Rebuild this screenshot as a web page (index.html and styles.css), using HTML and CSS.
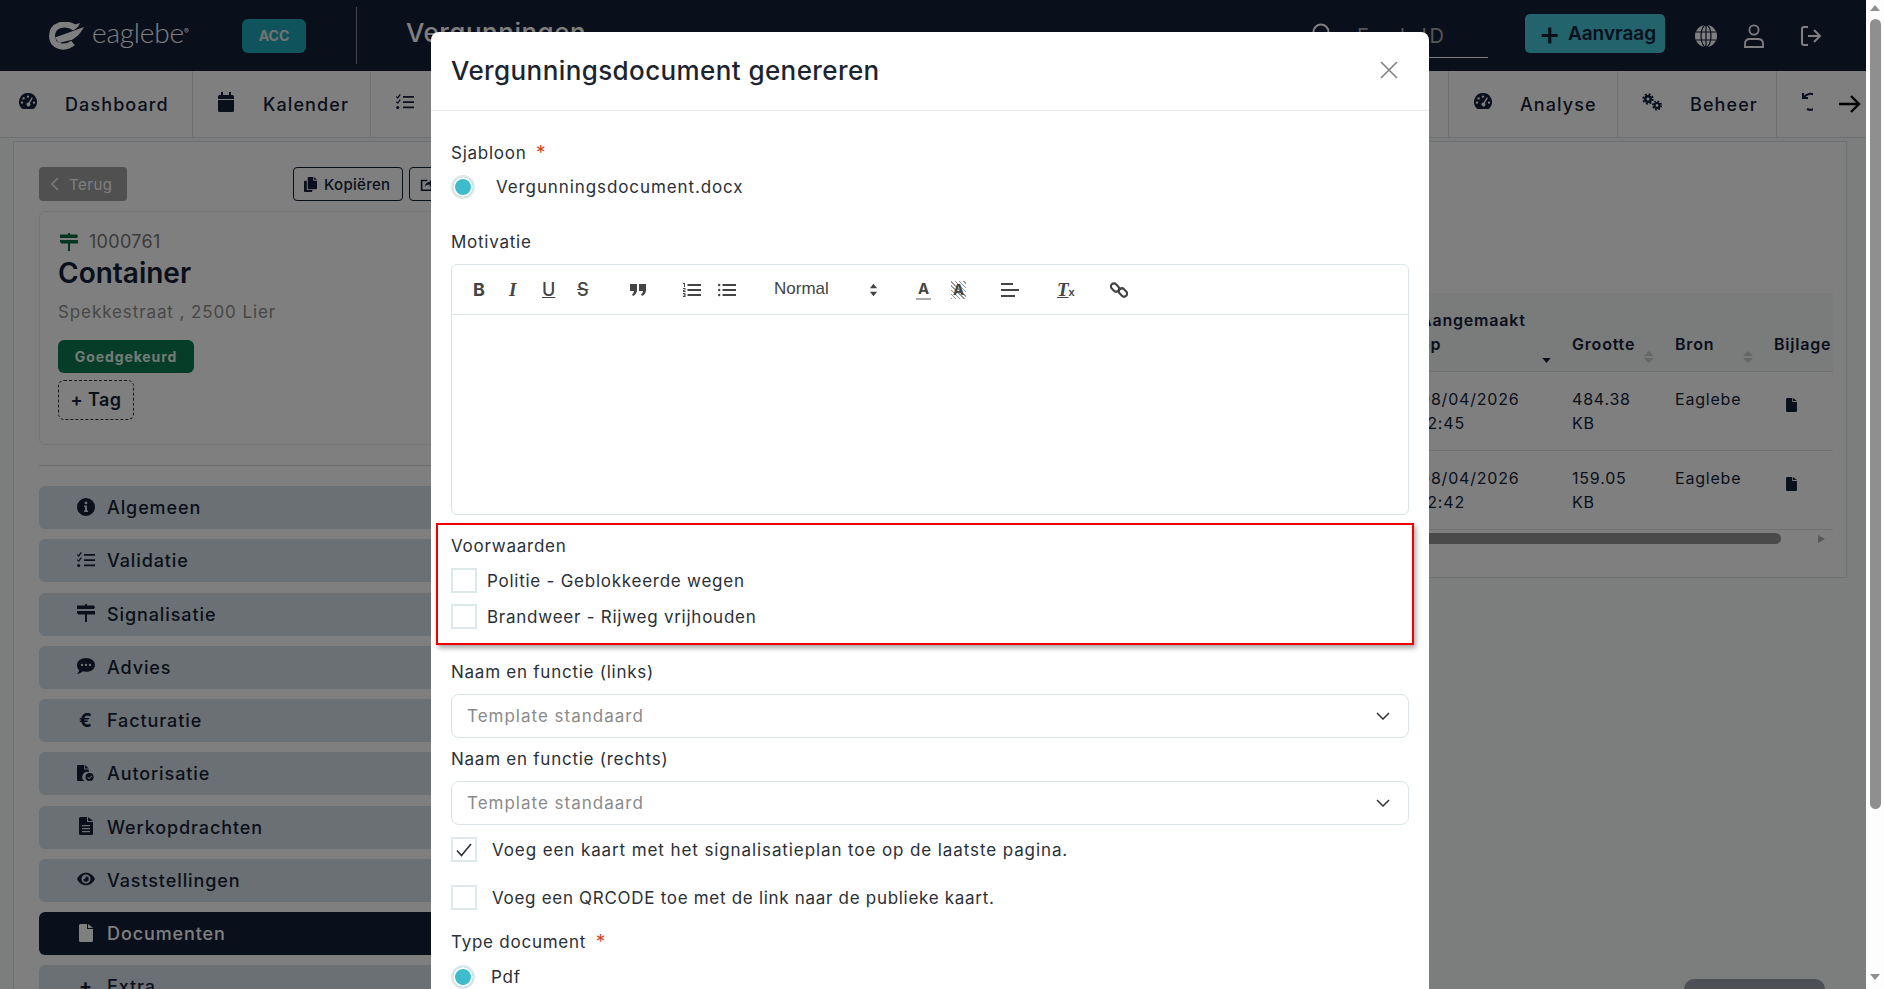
FILE: index.html
```html
<!DOCTYPE html>
<html lang="nl">
<head>
<meta charset="UTF-8">
<title>Vergunningen</title>
<link rel="stylesheet" href="styles.css">
</head>
<body>
<svg class="sprite" width="0" height="0">
  <symbol id="i-gauge" viewBox="0 0 18 18"><path fill-rule="evenodd" d="M9 0a9 9 0 0 1 6.500 15.200q-.6.8-1.500.8H4q-.9 0-1.500-.8A9 9 0 0 1 9 0zM9 2.400a1.200 1.200 0 1 0 0 2.400 1.200 1.200 0 0 0 0-2.400zM4.600 4.200a1.200 1.200 0 1 0 0 2.400 1.200 1.200 0 0 0 0-2.400zM3 8.400a1.200 1.200 0 1 0 0 2.400 1.200 1.200 0 0 0 0-2.400zM15 8.400a1.200 1.200 0 1 0 0 2.400 1.200 1.200 0 0 0 0-2.400zM12.700 4.300L9.600 9.400a2 2 0 1 0 1.300.6l3-5z"/></symbol>
  <symbol id="i-cal" viewBox="0 0 16 20"><path d="M3 0h2v3h6V0h2v3h1.500Q16 3 16 4.500V7H0V4.500Q0 3 1.500 3H3zM0 8h16v10.500Q16 20 14.500 20h-13Q0 20 0 18.500z"/></symbol>
  <symbol id="i-tasks" viewBox="0 0 18 16"><path d="M7 2h11v1.800H7zM7 7.200h11V9H7zM7 12.400h11v1.800H7zM.6 2l1 1L3.800 0l1 .7L1.800 5 0 3zM.6 7.200l1 1 2.200-3 1 .7-3 4.100L0 8.200z"/><circle cx="1.700" cy="13.500" r="1.600"/></symbol>
  <symbol id="i-sign" viewBox="0 0 18 18"><path d="M8 0h2v1.500h7l1 1.800-1 1.700H0V1.500h8zM0 7h18v3.500H10V18H8v-7.500H1l-1-1.700z"/></symbol>
  <symbol id="i-info" viewBox="0 0 18 18"><path fill-rule="evenodd" d="M9 0a9 9 0 1 1 0 18A9 9 0 0 1 9 0zM9 3.500a1.400 1.400 0 1 0 0 2.800 1.400 1.400 0 0 0 0-2.800zM7 7.500v1.600h1v3.300H7V14h4v-1.600h-1V7.500z"/></symbol>
  <symbol id="i-chat" viewBox="0 0 18 16"><path fill-rule="evenodd" d="M9 0c5 0 9 3 9 6.900s-4 6.900-9 6.900c-1.200 0-2.300-.2-3.300-.5C4.300 14.600 2.300 16 0 16c1-.9 1.900-2.200 2.200-3.700C.8 11 0 9 0 6.900 0 3 4 0 9 0zM5 5.700a1.200 1.200 0 1 0 0 2.400 1.200 1.200 0 0 0 0-2.400zM9 5.700a1.200 1.200 0 1 0 0 2.400 1.200 1.200 0 0 0 0-2.400zM13 5.700a1.200 1.200 0 1 0 0 2.400 1.200 1.200 0 0 0 0-2.400z"/></symbol>
  <symbol id="i-filecheck" viewBox="0 0 20 18"><path d="M1.500 0H8v5h5v3.100A5.500 5.500 0 0 0 8.400 18H1.500Q0 18 0 16.500v-15Q0 0 1.500 0zM9 0l4 4H9z"/><path fill-rule="evenodd" d="M14 9a4.500 4.500 0 1 1 0 9 4.500 4.500 0 0 1 0-9zm2.200 2.800l-2.800 2.700-1.300-1.200-.7.700 2 1.900 3.500-3.400z"/></symbol>
  <symbol id="i-filetext" viewBox="0 0 14 18"><path fill-rule="evenodd" d="M1.500 0H8v5h6v11.500q0 1.500-1.500 1.500h-11Q0 18 0 16.500v-15Q0 0 1.500 0zM9 0l5 4H9zM3 8v1.200h8V8zM3 11v1.200h8V11zM3 14v1.200h8V14z"/></symbol>
  <symbol id="i-eye" viewBox="0 0 20 14"><path fill-rule="evenodd" d="M10 0c4.500 0 8.200 3 10 7-1.800 4-5.500 7-10 7S1.800 11 0 7c1.800-4 5.500-7 10-7zm0 2a5 5 0 1 0 0 10 5 5 0 0 0 0-10zm0 2a3 3 0 1 1-3 3c.8.500 2.500.200 3-3z"/></symbol>
  <symbol id="i-file" viewBox="0 0 14 18"><path d="M1.500 0H8v5h6v11.500q0 1.500-1.500 1.500h-11Q0 18 0 16.500v-15Q0 0 1.500 0zM9 0l5 4H9z"/></symbol>
  <symbol id="i-chev" viewBox="0 0 14 8"><path d="M1 1l6 6 6-6" fill="none" stroke="currentColor" stroke-width="1.500"/></symbol>
  <symbol id="i-sort" viewBox="0 0 10 12"><path d="M5 0l5 5H0zM0 7h10l-5 5z"/></symbol>
  <symbol id="i-check" viewBox="0 0 16 14"><path d="M1 7.500l4.500 5L15 1" fill="none" stroke="currentColor" stroke-width="1.600"/></symbol>
</svg>

<div class="page">
  <header class="topbar">
    <div class="logo">
      <svg class="logo-mark" viewBox="0 0 36 28"><path d="M27 6C17-1 4 3 4 14c0 10 12 14 21 7" fill="none" stroke="#fff" stroke-width="6"/><path d="M7 15.500L36 5c-4 7-8 11-13 13l-12 3z" fill="#fff"/><path d="M22 4l10-3c-1 3-3 5-6 7z" fill="#fff"/></svg>
      <span class="logo-text">eaglebe</span>
      <sup class="logo-reg">®</sup>
    </div>
    <span class="env">ACC</span>
    <span class="top-div"></span>
    <span class="app-title">Vergunningen</span>
    <div class="top-right">
      <svg class="search-icon" viewBox="0 0 20 20"><circle cx="9" cy="9" r="7.500" fill="none" stroke="#fff" stroke-width="2"/><path d="M14.500 14.500L19 19" stroke="#fff" stroke-width="2"/></svg>
      <span class="search-field">EagleID</span>
      <button class="new-btn"><span class="plus">+</span>Aanvraag</button>
      <svg class="top-icon globe" viewBox="0 0 22 22"><circle cx="11" cy="11" r="11" fill="#fff"/><g fill="none" stroke="#141e38" stroke-width="1.200"><ellipse cx="11" cy="11" rx="5" ry="11"/><path d="M11 0v22M1 7h20M1 15h20"/></g></svg>
      <svg class="top-icon user" viewBox="0 0 20 24"><g fill="none" stroke="#fff" stroke-width="1.800"><circle cx="10" cy="6" r="4.600"/><path d="M1 23v-3q0-5 5-5h8q5 0 5 5v3z"/></g></svg>
      <svg class="top-icon exit" viewBox="0 0 22 22"><g fill="none" stroke="#fff" stroke-width="2"><path d="M8 2H4Q2 2 2 4v14q0 2 2 2h4"/><path d="M8 11h12M14 5l6 6-6 6"/></g></svg>
    </div>
  </header>

  <nav class="mainnav">
    <a class="nav-item w192"><svg class="nav-icon"><use href="#i-gauge"/></svg>Dashboard</a>
    <a class="nav-item w178"><svg class="nav-icon cal"><use href="#i-cal"/></svg>Kalender</a>
    <a class="nav-item grow"><svg class="nav-icon"><use href="#i-tasks"/></svg>Taken</a>
    <a class="nav-item w169"><svg class="nav-icon"><use href="#i-gauge"/></svg>Analyse</a>
    <a class="nav-item w159">
      <svg class="nav-icon cogs" viewBox="0 0 20 18"><g fill="none" stroke="#141e38"><circle cx="6" cy="6" r="2.800" stroke-width="2.400"/><circle cx="6" cy="6" r="4.800" stroke-width="1.800" stroke-dasharray="2 1.770"/><circle cx="15" cy="12.500" r="2.500" stroke-width="2.200"/><circle cx="15" cy="12.500" r="4.200" stroke-width="1.600" stroke-dasharray="1.800 1.500"/></g></svg>Beheer</a>
    <div class="nav-end">
      <svg class="hist" viewBox="0 0 11 20"><path d="M1 2v5h5M2 6A8 8 0 1 1 5 18" fill="none" stroke="#141e38" stroke-width="2"/></svg>
      <svg class="nav-arrow" viewBox="0 0 22 20"><path d="M0 10h20M12 2l8 8-8 8" fill="none" stroke="#000" stroke-width="2.400"/></svg>
    </div>
  </nav>

  <main class="content">
    <aside class="side">
      <div class="side-actions">
        <button class="back-btn"><svg viewBox="0 0 8 14"><path d="M7 1L1 7l6 6" fill="none" stroke="currentColor" stroke-width="1.400"/></svg>Terug</button>
        <button class="ghost-btn"><svg viewBox="0 0 14 16"><path d="M5 0h5v4h4v8q0 1-1 1H5q-1 0-1-1V1q0-1 1-1zM11 0l3 3h-3zM0 5q0-1 1-1h2v9q0 1 1 1h5v1q0 1-1 1H1q-1 0-1-1z"/></svg>Kopiëren</button>
        <button class="ghost-btn"><svg viewBox="0 0 16 16"><path d="M1 2h8v2H3v10h10v-4h2v5q0 1-1 1H1z"/><path d="M6 11c0-4 3-6 6-6V2l4 4.500L12 11V8c-3 0-5 1-6 3z"/></svg>Delen</button>
      </div>
      <section class="dossier">
        <div class="dossier-id"><svg class="sign"><use href="#i-sign"/></svg>1000761</div>
        <h2>Container</h2>
        <p class="address">Spekkestraat , 2500 Lier</p>
        <span class="status">Goedgekeurd</span>
        <span class="tag">+ Tag</span>
      </section>
      <ul class="side-menu">
        <li><svg><use href="#i-info"/></svg>Algemeen</li>
        <li><svg><use href="#i-tasks"/></svg>Validatie</li>
        <li><svg><use href="#i-sign"/></svg>Signalisatie</li>
        <li><svg><use href="#i-chat"/></svg>Advies</li>
        <li><span class="euro">€</span>Facturatie</li>
        <li><svg><use href="#i-filecheck"/></svg>Autorisatie</li>
        <li><svg><use href="#i-filetext"/></svg>Werkopdrachten</li>
        <li><svg><use href="#i-eye"/></svg>Vaststellingen</li>
        <li class="active"><svg><use href="#i-file"/></svg>Documenten</li>
        <li><span class="euro">+</span>Extra</li>
      </ul>
    </aside>

    <section class="docs">
      <div class="docs-table">
        <div class="row head">
          <div class="c-name"></div>
          <div class="c-date">Aangemaakt<br>op<svg class="sort-down" viewBox="0 0 10 6"><path d="M0 0h10L5 6z"/></svg></div>
          <div class="c-size">Grootte<svg class="sort"><use href="#i-sort"/></svg></div>
          <div class="c-src">Bron<svg class="sort"><use href="#i-sort"/></svg></div>
          <div class="c-att">Bijlage</div>
        </div>
        <div class="row">
          <div class="c-name"></div>
          <div class="c-date">08/04/2026<br>12:45</div>
          <div class="c-size">484.38<br>KB</div>
          <div class="c-src">Eaglebe</div>
          <div class="c-att"><svg class="att"><use href="#i-file"/></svg></div>
        </div>
        <div class="row">
          <div class="c-name"></div>
          <div class="c-date">08/04/2026<br>12:42</div>
          <div class="c-size">159.05<br>KB</div>
          <div class="c-src">Eaglebe</div>
          <div class="c-att"><svg class="att"><use href="#i-file"/></svg></div>
        </div>
        <div class="hscroll"><span class="hthumb"></span><span class="harrow"></span></div>
      </div>
    </section>
  </main>

  <span class="float-btn"></span>
  <div class="backdrop"></div>

  <div class="modal">
    <div class="modal-head">
      <h1>Vergunningsdocument genereren</h1>
      <svg class="close" viewBox="0 0 18 18"><path d="M1 1l16 16M17 1L1 17" stroke="#808080" stroke-width="1.600"/></svg>
    </div>
    <div class="modal-body">
      <div class="lbl sjabloon">Sjabloon <b class="req">*</b></div>
      <label class="radio docx"><span class="radio-dot"></span>Vergunningsdocument.docx</label>

      <div class="lbl motivatie">Motivatie</div>
      <div class="editor">
        <div class="toolbar">
          <span class="t-b">B</span>
          <span class="t-i">I</span>
          <span class="t-u">U</span>
          <span class="t-s">S</span>
          <svg class="t-q" viewBox="0 0 16 12"><path d="M0 0h7v6q0 4-4 6l-1-1.500Q4 9 4 7H0zM9 0h7v6q0 4-4 6l-1-1.500q2-1.500 2-3.500H9z" fill="#444"/></svg>
          <svg class="t-ol" viewBox="0 0 18 14"><path d="M4.500 1H18v2H4.500zM4.500 6H18v2H4.500zM4.500 11H18v2H4.500zM0 0h2v4H1V1H0zM0 5h2.500v2.500H1V8h1.500v1H0V7h1.500v-1H0zM0 10h2.500v4H0v-1h1.500v-.5H.5v-1h1V11H0z" fill="#444"/></svg>
          <svg class="t-ul" viewBox="0 0 18 14"><g fill="#444"><circle cx="1.200" cy="2" r="1.200"/><circle cx="1.200" cy="7" r="1.200"/><circle cx="1.200" cy="12" r="1.200"/><path d="M4.500 1H18v2H4.500zM4.500 6H18v2H4.500zM4.500 11H18v2H4.500z"/></g></svg>
          <span class="t-font">Normal</span>
          <svg class="t-sort" viewBox="0 0 10 14"><path d="M5 0l4 5H1zM1 9h8l-4 5z" fill="#444"/></svg>
          <span class="t-color">A</span>
          <span class="t-bg">A</span>
          <svg class="t-al" viewBox="0 0 18 14"><path d="M0 0h12v2H0zM0 6h18v2H0zM0 12h14v2H0z" fill="#444"/></svg>
          <span class="t-clear">T<small>x</small></span>
          <svg class="t-link" viewBox="0 0 18 18"><g fill="none" stroke="#444" stroke-width="2.200"><rect x=".5" y="3.500" width="9" height="6" rx="3" transform="rotate(45 5 6.500)"/><rect x="8.500" y="8.500" width="9" height="6" rx="3" transform="rotate(45 13 11.500)"/></g></svg>
        </div>
        <div class="editor-area"></div>
      </div>

      <div class="conditions">
        <div class="lbl">Voorwaarden</div>
        <label class="check first"><span class="box"></span>Politie - Geblokkeerde wegen</label>
        <label class="check"><span class="box"></span>Brandweer - Rijweg vrijhouden</label>
      </div>

      <div class="lbl sel-lbl">Naam en functie (links)</div>
      <div class="select">Template standaard<svg><use href="#i-chev"/></svg></div>
      <div class="lbl sel-lbl2">Naam en functie (rechts)</div>
      <div class="select">Template standaard<svg><use href="#i-chev"/></svg></div>

      <label class="check wide map"><span class="box"><svg><use href="#i-check"/></svg></span>Voeg een kaart met het signalisatieplan toe op de laatste pagina.</label>
      <label class="check wide qr"><span class="box"></span>Voeg een QRCODE toe met de link naar de publieke kaart.</label>

      <div class="lbl type">Type document <b class="req">*</b></div>
      <label class="radio pdf"><span class="radio-dot"></span>Pdf</label>
    </div>
  </div>
</div>

<div class="vscroll">
  <span class="vs-up"></span>
  <span class="vs-thumb"></span>
  <span class="vs-down"></span>
</div>
</body>
</html>
```

FILE: styles.css
```css
*{margin:0;padding:0;box-sizing:border-box;}
html,body{height:989px;overflow:hidden;}
body{display:flex;font-family:'Inter','Liberation Sans',sans-serif;color:#1c2430;background:#fff;}
.sprite{position:absolute;}
button{font-family:inherit;border:none;}
ul{list-style:none;}

.page{position:relative;flex:1;min-width:0;height:989px;overflow:hidden;background:#f8fafb;}
.backdrop{position:absolute;inset:0;background:rgba(0,0,0,0.5);z-index:10;}

/* top bar */
.topbar{height:71px;background:#141e38;display:flex;align-items:center;position:relative;}
.logo{display:flex;align-items:center;width:242px;padding-left:48px;}
.logo-mark{width:36px;height:28px;}
.logo-text{font-family:'Lato',sans-serif;font-size:28px;font-weight:300;color:#fff;margin-left:8px;margin-top:-8px;letter-spacing:-.2px;}
.logo-reg{font-size:7px;color:#fff;align-self:flex-start;margin-top:5px;}
.env{width:64px;height:34px;border-radius:6px;background:#1fa9bb;display:flex;align-items:center;justify-content:center;font-size:14px;font-weight:700;color:#e4e4e4;}
.top-div{width:1px;height:57px;background:#fff;opacity:.5;margin-left:50px;}
.app-title{font-size:26px;font-weight:500;letter-spacing:.5px;color:#fff;margin-left:49px;margin-top:-7px;}
.top-right{margin-left:auto;display:flex;align-items:center;padding-right:44px;color:#fff;}
.search-icon{width:20px;height:20px;margin-top:-6px;}
.search-field{width:131px;margin-left:25px;height:42px;padding-top:8px;margin-top:2px;border-bottom:1px solid #fff;font-size:20px;letter-spacing:2.500px;color:#aaa;margin-right:37px;}
.new-btn{width:140px;height:39px;background:#44c6d8;border-radius:5px;font-size:19px;font-weight:600;color:#141e38;display:flex;align-items:center;justify-content:center;gap:7px;padding-left:5px;margin-top:-5px;margin-right:30px;}
.plus{font-size:33px;font-weight:500;line-height:20px;}
.top-icon{width:22px;height:22px;}
.user{margin-left:27px;width:20px;height:24px;}
.exit{margin-left:36px;}

/* nav */
.mainnav{height:67px;background:#fff;border-bottom:1px solid #dde3e6;display:flex;}
.nav-item{display:flex;align-items:center;font-size:18px;font-weight:500;letter-spacing:1.100px;color:#141e38;border-right:1px solid #dde3e6;padding-left:19px;}
.nav-icon{width:18px;height:18px;margin-right:28px;margin-top:-4px;fill:#141e38;flex-shrink:0;}
.nav-icon.cal{width:16px;height:20px;margin-left:6px;margin-right:29px;}
.w192{width:193px;}
.w178{width:178px;}
.w169{width:169px;padding-left:25px;}
.w159{width:159px;padding-left:24px;}
.grow{flex:1;padding-left:25px;}
.nav-icon.cogs{width:20px;height:18px;}
.nav-end{width:89px;display:flex;align-items:center;padding-left:25px;overflow:hidden;}
.hist{width:11px;height:20px;margin-top:-6px;flex-shrink:0;}
.nav-arrow{width:22px;height:20px;margin-left:26px;flex-shrink:0;}

/* content */
.content{display:flex;padding-left:13px;padding-right:19px;margin-top:3px;height:848px;}
.side{width:418px;background:#fff;border-left:1px solid #dde3e6;border-top:1px solid #dde3e6;padding:25px 0 0 25px;flex-shrink:0;}
.side-actions{display:flex;align-items:center;height:34px;width:500px;}
.back-btn{width:88px;height:34px;border-radius:4px;background:#a0a0a0;color:#fff;font-size:15px;letter-spacing:.5px;display:flex;align-items:center;padding-left:12px;gap:10px;margin-right:166px;flex-shrink:0;}
.back-btn svg{width:8px;height:14px;}
.ghost-btn{height:34px;width:110px;border:1px solid #141e38;border-radius:4px;background:#fff;color:#141e38;font-size:15px;font-weight:500;letter-spacing:.3px;display:flex;align-items:center;gap:7px;padding-left:10px;margin-right:6px;flex-shrink:0;}
.ghost-btn svg{width:13px;height:15px;fill:#141e38;flex-shrink:0;}
.dossier{margin-top:10px;height:234px;width:500px;border:1px solid #e6ebed;border-radius:6px;padding:19px 18px;}
.dossier-id{display:flex;align-items:center;font-size:18px;color:#777;letter-spacing:.3px;line-height:22px;}
.sign{width:18px;height:18px;fill:#0d6b42;margin:0 11px 0 2px;}
.dossier h2{font-size:28px;font-weight:600;color:#141e38;line-height:36px;margin-top:2px;}
.address{font-size:17px;color:#8f8f8f;letter-spacing:.9px;margin-top:9px;line-height:24px;}
.status{display:block;width:136px;height:33px;line-height:33px;text-align:center;border-radius:6px;background:#0a7a50;color:#e8f6ef;font-size:14px;font-weight:700;letter-spacing:.9px;margin-top:16px;}
.tag{display:block;width:76px;height:40px;line-height:38px;text-align:center;border:1px dashed #333;border-radius:6px;font-size:18px;font-weight:600;letter-spacing:.4px;color:#141e38;margin-top:7px;}
.side-menu{margin-top:20px;border-top:1px solid #d4d8da;padding-top:20px;width:500px;}
.side-menu li{height:43px;margin-bottom:10.250px;border-radius:6px;background:#d4e0e6;display:flex;align-items:center;padding-left:38px;font-size:18px;font-weight:500;letter-spacing:.9px;color:#141e38;}
.side-menu li svg{width:18px;height:18px;fill:#141e38;margin-right:12px;margin-top:-2px;flex-shrink:0;}
.side-menu .euro{width:18px;margin-right:12px;text-align:center;font-size:19px;font-weight:700;}
.side-menu .active{background:#141e38;color:#fff;}
.side-menu .active svg{fill:#fff;}

/* documents table, its left columns lie under the modal */
.docs{flex:1;height:437px;background:#fff;border:1px solid #dde3e6;border-left:none;padding:151px 13px 0 0;}
.docs-table{font-size:16px;letter-spacing:.8px;color:#141e38;}
.row{display:flex;height:79px;border-bottom:1px solid #dfe3e5;padding-top:15px;line-height:24px;}
.row.head{height:79px;background:#f5f6f7;font-weight:600;}
.row.head .c-size,.row.head .c-src,.row.head .c-att{padding-top:24px;}
.c-name{flex:1;}
.c-date{width:152px;position:relative;}
.c-size{width:103px;position:relative;}
.c-src{width:99px;position:relative;}
.c-att{width:59px;white-space:nowrap;overflow:hidden;}
.sort{position:absolute;left:72px;top:43px;width:10px;height:12px;fill:#ccc;}
.c-src .sort{left:68px;}
.sort-down{position:absolute;left:122px;top:50px;width:9px;height:5px;fill:#141e38;}
.att{width:11px;height:14px;margin:11px 0 0 12px;fill:#141e38;}
.hscroll{position:relative;height:22px;}
.hthumb{position:absolute;top:3px;right:52px;width:361px;height:11px;border-radius:6px;background:#949494;}
.harrow{position:absolute;top:5px;right:8px;border-left:7px solid #b0b0b0;border-top:4.500px solid transparent;border-bottom:4.500px solid transparent;}
.float-btn{position:absolute;left:1684px;top:979px;width:141px;height:30px;border-radius:10px 10px 0 0;background:#9aa0a8;}

/* modal */
.modal{position:absolute;left:431px;top:32px;width:998px;height:980px;background:#fff;border-radius:8px 8px 0 0;z-index:20;}
.modal-head{height:79px;border-bottom:1px solid #e3e9ec;display:flex;align-items:center;justify-content:space-between;padding:0 31px 2px 20px;}
.modal-head h1{font-size:26px;font-weight:500;letter-spacing:.4px;color:#1c2430;}
.close{width:18px;height:18px;}
.modal-body{padding:0 20px;font-size:17px;letter-spacing:.75px;color:#2a3038;}
.lbl{line-height:24px;color:#2a3038;}
.req{color:#d6451f;font-weight:400;font-size:19px;margin-left:4px;}
.sjabloon{margin-top:30px;}
.radio{display:flex;align-items:center;}
.radio-dot{width:24px;height:24px;border-radius:50%;border:2px solid #dce8ea;position:relative;flex-shrink:0;background:#3fbccb;box-shadow:inset 0 0 0 2px #fff;}
.docx{margin-top:10px;height:24px;letter-spacing:.9px;}
.docx .radio-dot{margin-right:21px;}
.motivatie{margin-top:31px;}
.editor{margin-top:10px;height:251px;border:1px solid #d9e5e7;border-radius:6px;}
.toolbar{height:50px;border-bottom:1px solid #dce7e9;position:relative;display:flex;align-items:center;color:#444;letter-spacing:0;}
.toolbar span,.toolbar svg{position:absolute;}
.t-b{left:21px;font-weight:700;font-size:18px;}
.t-i{left:57px;font-style:italic;font-family:'Liberation Serif',serif;font-size:19px;font-weight:700;}
.t-u{left:90px;font-size:18px;font-weight:500;text-decoration:underline;}
.t-s{left:125px;font-size:18px;font-weight:500;text-decoration:line-through;}
.t-q{left:178px;width:16px;height:12px;}
.t-ol{left:231px;width:18px;height:14px;}
.t-ul{left:266px;width:18px;height:14px;}
.t-font{left:322px;font-family:'Liberation Sans',sans-serif;font-size:17px;top:14px;}
.t-sort{left:417px;width:9px;height:14px;}
.t-color{left:464px;font-weight:700;font-size:15px;border-bottom:2px solid #aaa;line-height:18px;padding:0 2px;}
.t-bg{left:499px;font-weight:700;font-size:15px;line-height:18px;padding:0 2px;background:repeating-linear-gradient(45deg,#999 0 1px,#fff 1px 3px);}
.t-al{left:549px;width:18px;height:14px;}
.t-clear{left:605px;font-family:'Liberation Serif',serif;font-style:italic;font-weight:700;font-size:19px;text-decoration:underline;}
.t-clear small{font-family:'Liberation Sans',sans-serif;font-style:normal;font-size:11px;display:inline-block;}
.t-link{left:658px;width:18px;height:18px;}

.conditions{margin:8px -5px 0 -15px;padding:9px 13px 6px;height:122px;border:2px solid #ee0000;box-shadow:2px 3px 5px rgba(0,0,0,0.35);}
.check{display:flex;align-items:center;min-height:25px;}
.box{width:26px;height:25px;border:2px solid #dce8ea;background:#fff;margin-right:10px;display:flex;align-items:center;justify-content:center;flex-shrink:0;}
.box svg{width:16px;height:14px;color:#2a3038;}
.conditions .first{margin-top:10px;margin-bottom:11px;}
.sel-lbl{margin-top:15px;}
.sel-lbl2{margin-top:9px;}
.select{margin-top:10px;height:44px;border:1px solid #d9e5e7;border-radius:8px;display:flex;align-items:center;justify-content:space-between;padding:0 18px 0 15px;color:#8a8a8a;letter-spacing:1px;}
.select svg{width:14px;height:8px;color:#333;}
.wide .box{margin-right:15px;}
.map{margin-top:12px;letter-spacing:.9px;}
.qr{margin-top:23px;letter-spacing:.7px;}
.type{margin-top:20px;}
.pdf{margin-top:11px;}
.pdf .radio-dot{margin-right:16px;}

/* page scrollbar */
.vscroll{width:18px;height:989px;background:#fdfdfd;position:relative;flex-shrink:0;}
.vs-thumb{position:absolute;left:4px;top:19px;width:11px;height:790px;border-radius:6px;background:#8f8f8f;}
.vs-up{position:absolute;left:4px;top:5px;border-bottom:6px solid #8f8f8f;border-left:5px solid transparent;border-right:5px solid transparent;}
.vs-down{position:absolute;left:4px;top:974px;border-top:6px solid #8f8f8f;border-left:5px solid transparent;border-right:5px solid transparent;}
```
